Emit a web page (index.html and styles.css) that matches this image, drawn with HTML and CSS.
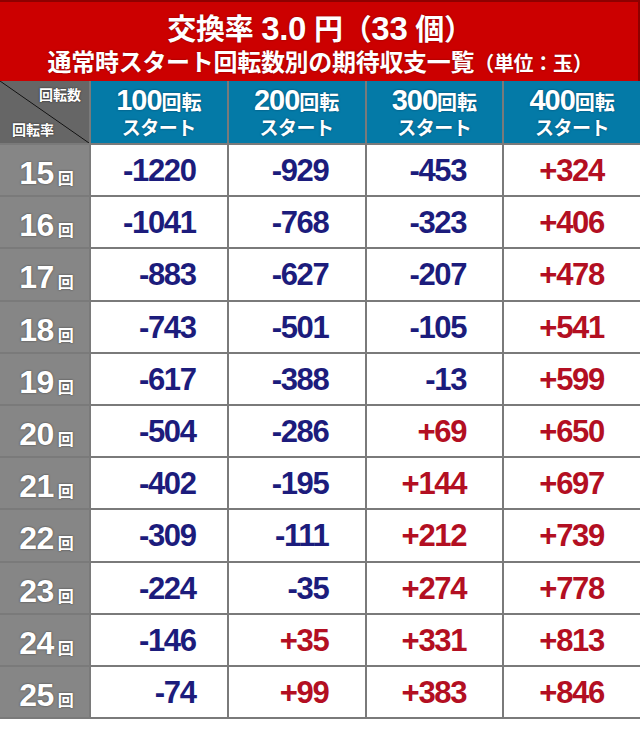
FILE: index.html
```html
<!DOCTYPE html>
<html lang="ja">
<head>
<meta charset="utf-8">
<link rel="stylesheet" href="styles.css">
</head>
<body>
<div class="page">
  <header class="title">
    <div class="t1">交換率 <span class="tn">3.0</span> 円（<span class="tn">33</span> 個）</div>
    <div class="t2">通常時スタート回転数別の期待収支一覧<span class="unit">（単位：玉）</span></div>
  </header>
  <div class="grid">
    <div class="corner"><span class="c-top">回転数</span><span class="c-bot">回転率</span></div>
    <div class="hd"><div class="hd1"><span class="hn">100</span>回転</div><div class="hd2">スタート</div></div>
    <div class="hd"><div class="hd1"><span class="hn">200</span>回転</div><div class="hd2">スタート</div></div>
    <div class="hd"><div class="hd1"><span class="hn">300</span>回転</div><div class="hd2">スタート</div></div>
    <div class="hd"><div class="hd1"><span class="hn">400</span>回転</div><div class="hd2">スタート</div></div>

    <div class="lbl"><span class="ln">15</span><span class="lk">回</span></div>
    <div class="v c1 neg">-1220</div><div class="v neg">-929</div><div class="v neg">-453</div><div class="v pos">+324</div>

    <div class="lbl"><span class="ln">16</span><span class="lk">回</span></div>
    <div class="v c1 neg">-1041</div><div class="v neg">-768</div><div class="v neg">-323</div><div class="v pos">+406</div>

    <div class="lbl"><span class="ln">17</span><span class="lk">回</span></div>
    <div class="v c1 neg">-883</div><div class="v neg">-627</div><div class="v neg">-207</div><div class="v pos">+478</div>

    <div class="lbl"><span class="ln">18</span><span class="lk">回</span></div>
    <div class="v c1 neg">-743</div><div class="v neg">-501</div><div class="v neg">-105</div><div class="v pos">+541</div>

    <div class="lbl"><span class="ln">19</span><span class="lk">回</span></div>
    <div class="v c1 neg">-617</div><div class="v neg">-388</div><div class="v neg">-13</div><div class="v pos">+599</div>

    <div class="lbl"><span class="ln">20</span><span class="lk">回</span></div>
    <div class="v c1 neg">-504</div><div class="v neg">-286</div><div class="v pos">+69</div><div class="v pos">+650</div>

    <div class="lbl"><span class="ln">21</span><span class="lk">回</span></div>
    <div class="v c1 neg">-402</div><div class="v neg">-195</div><div class="v pos">+144</div><div class="v pos">+697</div>

    <div class="lbl"><span class="ln">22</span><span class="lk">回</span></div>
    <div class="v c1 neg">-309</div><div class="v neg">-111</div><div class="v pos">+212</div><div class="v pos">+739</div>

    <div class="lbl"><span class="ln">23</span><span class="lk">回</span></div>
    <div class="v c1 neg">-224</div><div class="v neg">-35</div><div class="v pos">+274</div><div class="v pos">+778</div>

    <div class="lbl"><span class="ln">24</span><span class="lk">回</span></div>
    <div class="v c1 neg">-146</div><div class="v pos">+35</div><div class="v pos">+331</div><div class="v pos">+813</div>

    <div class="lbl"><span class="ln">25</span><span class="lk">回</span></div>
    <div class="v c1 neg">-74</div><div class="v pos">+99</div><div class="v pos">+383</div><div class="v pos">+846</div>
  </div>
</div>
</body>
</html>
```

FILE: styles.css
```css
html, body {
  margin: 0;
  padding: 0;
  background: #ffffff;
}
body {
  font-family: "Liberation Sans", "Noto Sans CJK JP", sans-serif;
  width: 640px;
  height: 731px;
  overflow: hidden;
}
.page {
  width: 640px;
}
.title {
  height: 81px;
  box-sizing: border-box;
  background: #cc0000;
  box-shadow: inset 0 2px 0 #8e0000, inset -2px 0 0 #8e0000;
  color: #ffffff;
  font-weight: bold;
  text-align: center;
  display: flex;
  flex-direction: column;
  align-items: center;
  padding-top: 12px;
  text-shadow: 0 0 2px rgba(80, 0, 0, 0.6);
}
.t1 {
  font-family: "Liberation Sans", "Noto Sans CJK JP", sans-serif;
  font-size: 29px;
  line-height: 36px;
  letter-spacing: -0.3px;
}
.t1 .tn {
  font-size: 33px;
  line-height: 1;
}
.t2 {
  font-family: "Liberation Sans", "Noto Sans CJK JP", sans-serif;
  font-size: 24px;
  line-height: 30px;
  letter-spacing: -0.3px;
}
.t2 .unit {
  font-size: 20px;
}
.grid {
  display: grid;
  grid-template-columns: 89px repeat(4, 1fr);
  grid-template-rows: 62px repeat(11, 50.2px);
  gap: 2px;
  background: #7a7a7a;
  border-bottom: 2px solid #7a7a7a;
}
.corner {
  background: #666666 linear-gradient(to top right, transparent calc(50% - 0.8px), #111111 50%, transparent calc(50% + 0.8px));
  display: flex;
  flex-direction: column;
  justify-content: space-between;
  padding: 5px 8px 6px 12px;
  color: #ffffff;
  font-family: "Noto Sans CJK JP", sans-serif;
  font-weight: bold;
  font-size: 14px;
  line-height: 16px;
  text-shadow: 0 0 2px rgba(0, 0, 0, 0.7);
}
.c-top {
  align-self: flex-end;
}
.c-bot {
  align-self: flex-start;
}
.hd {
  background: #047aa7;
  color: #ffffff;
  font-family: "Noto Sans CJK JP", sans-serif;
  font-weight: bold;
  display: flex;
  flex-direction: column;
  align-items: center;
  justify-content: center;
  text-shadow: 0 0 2px rgba(0, 30, 60, 0.6);
}
.hd1 {
  font-size: 20px;
  line-height: 28px;
  white-space: nowrap;
}
.hn {
  font-family: "Liberation Sans", sans-serif;
  font-size: 29px;
  letter-spacing: -1px;
}
.hd2 {
  font-size: 19px;
  line-height: 22px;
  letter-spacing: -0.5px;
}
.lbl {
  background: #868686;
  color: #ffffff;
  font-weight: bold;
  display: flex;
  align-items: baseline;
  justify-content: center;
  padding-top: 10px;
  padding-left: 4px;
  box-sizing: border-box;
  text-shadow: 0 0 2px rgba(0, 0, 0, 0.6);
}
.ln {
  font-family: "Liberation Sans", sans-serif;
  font-size: 32px;
  line-height: 36px;
  letter-spacing: -0.5px;
}
.lk {
  font-family: "Noto Sans CJK JP", sans-serif;
  font-size: 16px;
  margin-left: 4px;
}
.v {
  background: #ffffff;
  display: flex;
  align-items: center;
  justify-content: flex-end;
  padding-right: 36px;
  padding-top: 2px;
  box-sizing: border-box;
  font-family: "Liberation Sans", sans-serif;
  font-weight: bold;
  font-size: 31px;
  letter-spacing: -1.3px;
}
.v.c1 {
  padding-right: 31px;
}
.neg {
  color: #1c1c7c;
}
.pos {
  color: #b30f22;
}
```
